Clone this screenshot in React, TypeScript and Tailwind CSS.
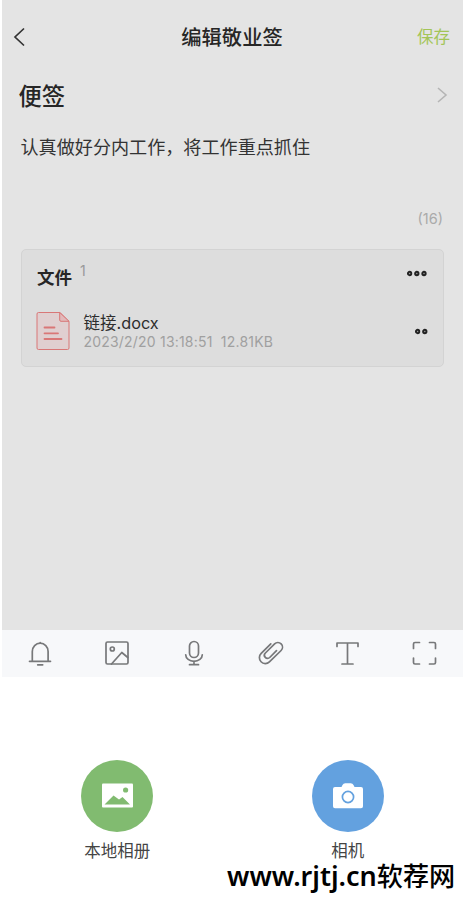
import type { ReactNode } from "react";

function ToolIcon({ label, children }: { label: string; children: ReactNode }) {
  return (
    <button aria-label={label} className="flex flex-1 items-center justify-center pr-px pb-[2px] text-[#77787a]">
      <svg width="28" height="28" viewBox="0 0 28 28" fill="none" stroke="currentColor" strokeWidth="1.7" strokeLinecap="round" strokeLinejoin="round">
        {children}
      </svg>
    </button>
  );
}

function Dots({ count }: { count: number }) {
  return (
    <svg width={count * 7.2} height="7" viewBox={`0 0 ${count * 7.2} 7`} fill="#999" stroke="#222" strokeWidth="1.9">
      {Array.from({ length: count }, (_, i) => (
        <circle key={i} cx={3.6 + i * 7.2} cy="3.5" r="1.7" />
      ))}
    </svg>
  );
}

function Header() {
  return (
    <header className="grid h-[74px] grid-cols-3 items-center pr-[13px] pl-[9px]">
      <svg width="16" height="22" viewBox="0 0 16 22" fill="none" stroke="#333" strokeWidth="1.7">
        <path d="M13 2.500 4 11l9 8.500" />
      </svg>
      <h1 className="pt-px pl-[3px] text-center text-[20.3px] leading-6 font-medium whitespace-nowrap text-[#262626]">编辑敬业签</h1>
      <button className="text-right text-[16.5px] leading-6 text-[#a3c557]">保存</button>
    </header>
  );
}

function FileCard() {
  return (
    <section className="mr-[19px] ml-[19px] h-[118px] rounded-[5px] border border-[#d3d3d3] bg-[#dddddd] pr-[15px] pl-[15px]">
      <div className="flex h-[56px] justify-between">
        <div className="flex">
          <h3 className="pt-[16px] text-[17.5px] leading-6 font-bold text-[#262626]">文件</h3>
          <span className="pt-[11px] pl-[8px] text-[14px] leading-5 text-[#999]">1</span>
        </div>
        <div className="pt-[20px]"><Dots count={3} /></div>
      </div>
      <div className="flex">
        <svg className="mt-[5px] -ml-px" width="34" height="40" viewBox="0 0 34 40" fill="none" stroke="#d97777">
          <path d="M2.500 1.500H24l9 9V37q0 1.500-1.500 1.500h-29Q1 38.500 1 37V3q0-1.500 1.500-1.500Z" fill="#e0cfd0" />
          <path d="M23.700 1.500V9q0 1.300 1.300 1.300h8Z" fill="#e2b9ba" />
          <path d="M8.500 16.500h10M8.500 22.300h13.500M8.500 28h17" strokeWidth="1.800" strokeLinecap="round" />
        </svg>
        <div className="flex-1 pt-[7px] pl-[13.5px]">
          <p className="text-[16.5px] leading-5 text-[#2d2d2d]">链接<span className="text-[16.3px]">.docx</span></p>
          <p className="text-[14px] leading-[18px] tracking-[0.2px] whitespace-pre text-[#a0a0a0]">2023/2/20 13:18:51  12.81KB</p>
        </div>
        <div className="pt-[22px]"><Dots count={2} /></div>
      </div>
    </section>
  );
}

function Toolbar() {
  return (
    <nav className="flex h-[47px] bg-[#f7f8fa]">
      <ToolIcon label="提醒">
        <path d="M3.500 22.300h21M6.300 22V12.500a7.900 8.300 0 0 1 15.800 0V22M14.200 4.200V3.500M11.700 25.800h5" />
      </ToolIcon>
      <ToolIcon label="图片">
        <rect x="3" y="3" width="22" height="22" rx="1.500" />
        <circle cx="9.300" cy="10" r="2" />
        <path d="m8.500 25 10.300-11.500 6 5" />
      </ToolIcon>
      <ToolIcon label="语音">
        <rect x="9.500" y="2.500" width="9" height="16" rx="4.500" />
        <path d="M5.700 15.800a8.300 6.500 0 0 0 16.600 0M14 22v3M9.500 25.700h9" />
      </ToolIcon>
      <ToolIcon label="附件">
        <path d="M14.800 4.800 5.200 14.400a5.900 5.900 0 0 0 8.200 8.500L25.100 11.500a4.600 4.600 0 0 0-6.500-6.600L9.400 14a3.100 3.100 0 0 0 4.300 4.500l6.800-6.900" />
      </ToolIcon>
      <ToolIcon label="文字">
        <path d="M4 7.500V4h21v3.500M14.500 4v20.500M9 25h11" />
      </ToolIcon>
      <ToolIcon label="扫描">
        <path d="M3.500 9.500V5q0-1.500 1.500-1.500h4.500M19.500 3.500H24q1.500 0 1.500 1.500v4.500M25.500 19v4.500q0 1.500-1.500 1.500h-4.500M9.500 25H5q-1.500 0-1.500-1.500V19" />
      </ToolIcon>
    </nav>
  );
}

export default function App() {
  return (
    <main className="relative h-[922px] w-[463px] overflow-hidden bg-white pl-[2px] font-['Inter','Noto_Sans_CJK_SC',sans-serif]">
      <div className="h-[630px] bg-[#e4e4e4]">
        <Header />
        <div className="flex h-[43px] items-center justify-between pr-[15px] pl-[16.5px]">
          <h2 className="pt-[2px] text-[23.3px] leading-8 font-medium text-[#262626]">便签</h2>
          <svg className="-mt-[2px]" width="12" height="18" viewBox="0 0 12 18" fill="none" stroke="#b5b5b5" strokeWidth="1.600">
            <path d="m2 2 8 7-8 7" />
          </svg>
        </div>
        <p className="mt-[16px] pl-[18.5px] text-[18.1px] leading-7 text-[#333]">认真做好分内工作，将工作重点抓住</p>
        <p className="mt-[48px] mb-[19.5px] pr-5 text-right text-[14.5px] leading-5 text-[#aaa]">(16)</p>
        <FileCard />
      </div>
      <Toolbar />
      <div className="grid grid-cols-2 pt-[83px]">
        <button className="flex flex-col items-center">
          <span className="flex size-[72px] items-center justify-center rounded-full bg-[#81bb70]">
            <svg width="32" height="26" viewBox="0 0 32 26">
              <rect x="1" y="0.500" width="31" height="24" rx="1" fill="#fff" />
              <circle cx="24.600" cy="7" r="2.600" fill="#81bb70" />
              <path d="m3.500 21.500 9-9 5.500 4 3.500-2.500 7.500 7.500Z" fill="#81bb70" />
            </svg>
          </span>
          <span className="mt-[8px] text-[16.5px] leading-[23px] text-[#444]">本地相册</span>
        </button>
        <button className="flex flex-col items-center">
          <span className="flex size-[72px] items-center justify-center rounded-full bg-[#63a1df]">
            <svg width="32" height="26" viewBox="0 0 32 26">
              <path d="M3 4h6.500L10.500 2q.8-1.700 2.800-1.700h5.400q2 0 2.800 1.700L22.500 4H29q2 0 2 2v17.200q0 2-2 2H3q-2 0-2-2V6q0-2 2-2Z" fill="#fff" />
              <circle cx="16" cy="14" r="5.600" fill="none" stroke="#63a1df" strokeWidth="1.700" />
            </svg>
          </span>
          <span className="mt-[8px] text-[16.5px] leading-[23px] text-[#444]">相机</span>
        </button>
      </div>
      <div className="absolute top-[862px] left-[227px] font-['Noto_Sans','Noto_Sans_CJK_SC',sans-serif] text-[26.1px] leading-7 font-medium whitespace-nowrap text-black">
        <span className="text-[27px] font-semibold">www.rjtj.cn</span>软荐网
      </div>
    </main>
  );
}
